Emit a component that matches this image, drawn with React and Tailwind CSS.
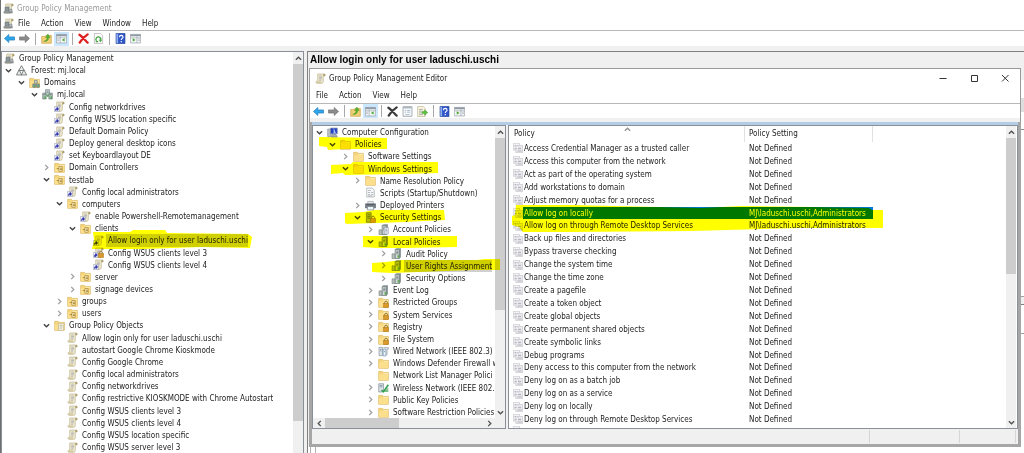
import { clsx } from 'clsx'

// Left padding per tree level
const indents = ['pl-[2px]', 'pl-[15px]', 'pl-[28px]', 'pl-[40px]', 'pl-[53px]', 'pl-[66px]', 'pl-[79px]']

const consoleTree = [
  { label: 'Group Policy Management', icon: 'console', root: true },
  { label: 'Forest: mj.local', icon: 'forest', level: 0, open: true },
  { label: 'Domains', icon: 'domains', level: 1, open: true },
  { label: 'mj.local', icon: 'domain', level: 2, open: true },
  { label: 'Config networkdrives', icon: 'link', level: 3 },
  { label: 'Config WSUS location specific', icon: 'link', level: 3 },
  { label: 'Default Domain Policy', icon: 'link', level: 3 },
  { label: 'Deploy general desktop icons', icon: 'link', level: 3 },
  { label: 'set Keyboardlayout DE', icon: 'link', level: 3 },
  { label: 'Domain Controllers', icon: 'ou', level: 3, open: false },
  { label: 'testlab', icon: 'ou', level: 3, open: true },
  { label: 'Config local administrators', icon: 'link', level: 4 },
  { label: 'computers', icon: 'ou', level: 4, open: true },
  { label: 'enable Powershell-Remotemanagement', icon: 'link', level: 5 },
  { label: 'clients', icon: 'ou', level: 5, open: true },
  { label: 'Allow login only for user laduschi.uschi', icon: 'link', level: 6, selected: true, marker: 'login' },
  { label: 'Config WSUS clients level 3', icon: 'linkLock', level: 6 },
  { label: 'Config WSUS clients level 4', icon: 'link', level: 6 },
  { label: 'server', icon: 'ou', level: 5, open: false },
  { label: 'signage devices', icon: 'ou', level: 5, open: false },
  { label: 'groups', icon: 'ou', level: 4, open: false },
  { label: 'users', icon: 'ou', level: 4, open: false },
  { label: 'Group Policy Objects', icon: 'gpoFolder', level: 3, open: true },
  { label: 'Allow login only for user laduschi.uschi', icon: 'scroll', level: 4 },
  { label: 'autostart Google Chrome Kioskmode', icon: 'scroll', level: 4 },
  { label: 'Config Google Chrome', icon: 'scroll', level: 4 },
  { label: 'Config local administrators', icon: 'scroll', level: 4 },
  { label: 'Config networkdrives', icon: 'scroll', level: 4 },
  { label: 'Config restrictive KIOSKMODE with Chrome Autostart', icon: 'scroll', level: 4 },
  { label: 'Config WSUS clients level 3', icon: 'scroll', level: 4 },
  { label: 'Config WSUS clients level 4', icon: 'scroll', level: 4 },
  { label: 'Config WSUS location specific', icon: 'scroll', level: 4 },
  { label: 'Config WSUS server level 3', icon: 'scroll', level: 4 },
]

const editorTree = [
  { label: 'Computer Configuration', icon: 'computer', level: 0, open: true },
  { label: 'Policies', icon: 'folder', level: 1, open: true, marker: 'policies' },
  { label: 'Software Settings', icon: 'folder', level: 2, open: false },
  { label: 'Windows Settings', icon: 'folder', level: 2, open: true, marker: 'windows' },
  { label: 'Name Resolution Policy', icon: 'folder', level: 3, open: false },
  { label: 'Scripts (Startup/Shutdown)', icon: 'script', level: 3 },
  { label: 'Deployed Printers', icon: 'printer', level: 3, open: false },
  { label: 'Security Settings', icon: 'serverLock', level: 3, open: true, marker: 'security' },
  { label: 'Account Policies', icon: 'serverDoc', level: 4, open: false },
  { label: 'Local Policies', icon: 'server', level: 4, open: true, marker: 'local' },
  { label: 'Audit Policy', icon: 'server', level: 5, open: false },
  { label: 'User Rights Assignment', icon: 'server', level: 5, open: false, selected: true, marker: 'rights' },
  { label: 'Security Options', icon: 'server', level: 5, open: false },
  { label: 'Event Log', icon: 'server', level: 4, open: false },
  { label: 'Restricted Groups', icon: 'folderLock', level: 4, open: false },
  { label: 'System Services', icon: 'folderLock', level: 4, open: false },
  { label: 'Registry', icon: 'folderLock', level: 4, open: false },
  { label: 'File System', icon: 'folderLock', level: 4, open: false },
  { label: 'Wired Network (IEEE 802.3) P', icon: 'wired', level: 4, open: false },
  { label: 'Windows Defender Firewall w', icon: 'folder', level: 4, open: false },
  { label: 'Network List Manager Polici', icon: 'folder', level: 4 },
  { label: 'Wireless Network (IEEE 802.1', icon: 'wireless', level: 4, open: false },
  { label: 'Public Key Policies', icon: 'folder', level: 4, open: false },
  { label: 'Software Restriction Policies', icon: 'folder', level: 4, open: false },
]

const policies = [
  { name: 'Access Credential Manager as a trusted caller' },
  { name: 'Access this computer from the network' },
  { name: 'Act as part of the operating system' },
  { name: 'Add workstations to domain' },
  { name: 'Adjust memory quotas for a process' },
  { name: 'Allow log on locally', setting: 'MJ\\laduschi.uschi,Administrators', selected: true },
  { name: 'Allow log on through Remote Desktop Services', setting: 'MJ\\laduschi.uschi,Administrators' },
  { name: 'Back up files and directories' },
  { name: 'Bypass traverse checking' },
  { name: 'Change the system time' },
  { name: 'Change the time zone' },
  { name: 'Create a pagefile' },
  { name: 'Create a token object' },
  { name: 'Create global objects' },
  { name: 'Create permanent shared objects' },
  { name: 'Create symbolic links' },
  { name: 'Debug programs' },
  { name: 'Deny access to this computer from the network' },
  { name: 'Deny log on as a batch job' },
  { name: 'Deny log on as a service' },
  { name: 'Deny log on locally' },
  { name: 'Deny log on through Remote Desktop Services' },
]

// Highlighter strokes, one outline per marked row
const markers = {
  login: { box: 'left-[90px] -top-[4px] w-[160px] h-[20px]', view: '0 0 160 20', points: '1,2 38,2 41,0 73,0 75,3 156,4 160,7 158,18 110,17 50,19 0,19 2,10' },
  policies: { box: 'left-[6px] -top-[1px] w-[68px] h-[13px]', view: '0 0 68 13', points: '0,0 68,1 68,12 25,12 9,13 8,10 0,9' },
  windows: { box: 'left-[18px] -top-[1px] w-[108px] h-[14px]', view: '0 0 108 14', points: '0,3 20,2 22,0 107,0 107,11 70,12 14,13 12,11 0,12' },
  security: { box: 'left-[32px] -top-[1px] w-[100px] h-[15px]', view: '0 0 100 15', points: '0,3 18,2 30,0 99,0 100,10 60,12 2,14 0,13' },
  local: { box: 'left-[50px] top-0 w-[94px] h-[12px]', view: '0 0 94 12', points: '0,0 94,0 94,11 40,12 14,12 0,11' },
  rights: { box: 'left-[59px] -top-[1px] w-[129px] h-[14px]', view: '0 0 129 14', points: '0,4 14,3 30,1 105,1 112,0 128,0 128,11 100,11 20,14 0,13' },
  logon: { box: 'left-[2px] -top-[3px] w-[374px] h-[28px]', view: '0 0 374 28', points: '5,1 60,1 190,4 230,2 300,3 358,4 361,6 372,6 372,24 290,24 180,27 60,28 12,28 8,23 1,21 1,12 4,11' },
}

function Marker({ name }) {
  const { box, view, points } = markers[name]
  return (
    <svg aria-hidden="true" viewBox={view} className={clsx('pointer-events-none absolute z-10 max-w-none mix-blend-multiply', box)}>
      <polygon points={points} fill="#ffff00" />
    </svg>
  )
}

function Scroll() {
  return (
    <g>
      <path d="M4 1.500h9.500c1.800 0 2 3 .2 3H12V12c0 2-1 3-2.500 3H3c-1.800 0-2.200-2.600-.4-2.900H4z" fill="#f1ecd2" stroke="#b9ae86" strokeWidth="1" />
      <path d="M12 4.500V3.200c0-1 .5-1.700 1.500-1.700 1.800 0 2 3 .2 3z" fill="#a89a68" />
      <path d="M6 4.500h4M6 6.500h4M6 8.500h4M6 10.500h3" stroke="#a0a0a8" strokeWidth="1" />
      <path d="M2.600 12.100h6.400v2.900H3c-1.500 0-1.800-2.500-.4-2.900z" fill="#d6cca2" />
    </g>
  )
}

function Folder() {
  return (
    <g>
      <path d="M1 2h5.500L8 3.500h7v11.500H1z" fill="#f5d67c" stroke="#d9ae4e" strokeWidth="0.9" />
      <path d="M1.500 6h13v8.500h-13z" fill="#fbdf8d" />
      <path d="M8 4.300h6.500v1.200H8z" fill="#fff2c2" />
    </g>
  )
}

function Lock() {
  return (
    <g>
      <path d="M9.700 10V8c0-2.700 4-2.700 4 0v2" fill="none" stroke="#8a7030" strokeWidth="1.400" />
      <rect x="8" y="9.500" width="7.500" height="6" fill="#d99a2b" stroke="#a8701a" strokeWidth="0.7" />
    </g>
  )
}

function ServerBox() {
  return (
    <g>
      <path d="M6 2l2-1.500h6.500V13l-2 2.500H6z" fill="#8e9a9b" />
      <path d="M6 2h6v13.500H6z" fill="#d5dcdc" stroke="#5f6b6d" strokeWidth="0.9" />
      <path d="M7.500 4.500h3.200M7.500 6.500h3.200M7.500 8.500h3.200" stroke="#5f6b6d" strokeWidth="1" />
      <path d="M9.500 10.500h2.500v3.500H9.500z" fill="#58a845" />
      <path d="M1.500 8.500h4v7h-4z" fill="#b7c0bb" stroke="#6b7872" strokeWidth="0.8" />
    </g>
  )
}

const drawings = {
  scroll: <Scroll />,
  console: (
    <g>
      <Scroll />
      <path d="M3 6h5v6H3z" fill="#8d989d" stroke="#5c666b" strokeWidth="0.8" />
      <path d="M1 12h13v3H1z" fill="#8c9296" />
      <path d="M9 9h4v4H9z" fill="#b8bec1" stroke="#6c757a" strokeWidth="0.8" />
    </g>
  ),
  forest: (
    <g fill="#e9ebe9" stroke="#666c6b" strokeWidth="1.200">
      <path d="M8 1l4 7H4z" />
      <path d="M4.500 7l4 7.500H.7z" />
      <path d="M11.500 7l4 7.500H7.700z" />
    </g>
  ),
  domains: (
    <g>
      <Folder />
      <path d="M8 5h4v4H8z" fill="#c7d0cf" stroke="#5f7073" strokeWidth="0.8" />
      <path d="M5.500 10h4v5h-4zM11 10h4v5h-4z" fill="#8fa9a3" stroke="#536b66" strokeWidth="0.8" />
      <path d="M7.500 12H9v2H7.500zM13 12h1.500v2H13z" fill="#4ea83f" />
    </g>
  ),
  domain: (
    <g>
      <path d="M5 1h6v8H5z" fill="#cfd8d8" stroke="#6c7c7d" strokeWidth="0.9" />
      <path d="M1 6h5v8.500H1zM10 6h5v8.500h-5z" fill="#aebdb9" stroke="#5b706a" strokeWidth="0.9" />
      <path d="M6.500 3h3M6.500 5h3M2 8h3M11 8h3" stroke="#637374" strokeWidth="0.9" />
      <path d="M3.500 11h2v3h-2zM12.500 11h2v3h-2zM7.500 8.500h2v3h-2z" fill="#45a844" />
    </g>
  ),
  link: (
    <g>
      <Scroll />
      <path d="M.5 8h7v7.500h-7z" fill="#eceef8" stroke="#9da0b5" strokeWidth="0.8" />
      <path d="M2 14c0-2.500 1-3.500 2.500-3.500V9l2.300 2.500-2.300 2.500v-1.500c-1 0-1.600.5-2.500 1.500z" fill="#2a2fa8" stroke="#2a2fa8" strokeWidth="0.7" />
    </g>
  ),
  linkLock: (
    <g>
      <Scroll />
      <path d="M.5 8h6.500v7.500H.5z" fill="#eceef8" stroke="#9da0b5" strokeWidth="0.8" />
      <path d="M2 14c0-2.500 1-3.500 2-3.500V9l2.300 2.500L4 14z" fill="#2a2fa8" stroke="#2a2fa8" strokeWidth="0.6" />
      <Lock />
    </g>
  ),
  ou: (
    <g>
      <Folder />
      <path d="M7 6.500h5v7H7z" fill="#fff4c9" stroke="#a8822a" strokeWidth="1" />
      <path d="M8.500 9h3M8.500 11h3M4 9.500h3" stroke="#94701c" strokeWidth="1.100" />
    </g>
  ),
  gpoFolder: (
    <g>
      <Folder />
      <path d="M6 5.500h8c1.500 0 1.500 2 0 2v6c0 1-.7 1.700-1.500 1.700H7c-1.300 0-1.300-2 0-2z" fill="#f7f3e0" stroke="#b3a984" strokeWidth="0.9" />
      <path d="M8.500 8H12M8.500 10H12M8.500 12h3" stroke="#a5a5a5" strokeWidth="0.9" />
    </g>
  ),
  folder: <Folder />,
  folderLock: (
    <g>
      <Folder />
      <Lock />
    </g>
  ),
  server: <ServerBox />,
  serverDoc: (
    <g>
      <ServerBox />
      <path d="M9 5h6v9.500H9z" fill="#eef1f6" stroke="#8189a0" strokeWidth="0.8" />
      <path d="M10.500 7.500h3M10.500 9.500h3M10.500 11.500h3" stroke="#7c87a8" strokeWidth="0.9" />
    </g>
  ),
  serverLock: (
    <g>
      <path d="M2 1h7v14H2z" fill="#b3bab4" stroke="#646e68" strokeWidth="0.9" />
      <path d="M3.500 4h4M3.500 6.500h4M3.500 9h4" stroke="#5d6661" strokeWidth="1" />
      <Lock />
    </g>
  ),
  computer: (
    <g>
      <path d="M1 3h4v11H1z" fill="#bcc3c9" stroke="#747d86" strokeWidth="0.8" />
      <path d="M5 1.500h10V10H5z" fill="#2440c4" stroke="#8d97a5" strokeWidth="1" />
      <path d="M10 2v7.500l2-2 1.500 3" fill="#a9c2ff" stroke="#dbe4ff" strokeWidth="0.6" />
      <path d="M7 11h6l2 3.500H6z" fill="#aab0b7" stroke="#5f6870" strokeWidth="0.7" />
    </g>
  ),
  script: (
    <g>
      <path d="M2.500 1.500h8l3 3v10h-11z" fill="#f8f9fa" stroke="#a1a6ab" strokeWidth="1" />
      <path d="M4.500 5h4M4.500 8h3M9 8h3M4.500 11h3M9 11h3M4.500 13h6" stroke="#9199a3" strokeWidth="1" />
    </g>
  ),
  printer: (
    <g>
      <path d="M4 2h8v4H4z" fill="#e8eaec" stroke="#8f959b" strokeWidth="0.8" />
      <path d="M.5 5.500h15v6H.5z" fill="#7d858d" stroke="#535a61" strokeWidth="0.8" />
      <path d="M3.500 9.500h9v5h-9z" fill="#eef5fb" stroke="#6c747b" strokeWidth="0.9" />
      <path d="M2 7h12" stroke="#3c4248" strokeWidth="1" />
    </g>
  ),
  wired: (
    <g>
      <path d="M1.500 2h5v12h-5z" fill="#dde4ea" stroke="#7a8791" strokeWidth="0.9" />
      <path d="M7.500 4.500h4v10h-4z" fill="#eaf1f8" stroke="#6286aa" strokeWidth="0.9" />
      <path d="M8 2.500h7v2h-2v9" fill="none" stroke="#8b98a4" strokeWidth="1.200" />
      <path d="M3 5h2M3 7h2M8.800 8h1.500" stroke="#56748f" strokeWidth="0.9" />
    </g>
  ),
  wireless: (
    <g>
      <path d="M1 2.500h7v12H1z" fill="#dbe2e8" stroke="#77848e" strokeWidth="0.9" />
      <path d="M2.500 5h4M2.500 7h4" stroke="#6c7983" strokeWidth="0.9" />
      <path d="M8 14.500h7V8z" fill="#7fbf8c" />
      <path d="M5 12l3 2 7-10" fill="none" stroke="#2f9d4d" strokeWidth="2.200" />
    </g>
  ),
  policy: (
    <g>
      <path d="M.5.5h10v11H.5z" fill="#f4f4f6" stroke="#b9b9c0" strokeWidth="0.9" />
      <path d="M10.500 4h5v11.500h-11v-4" fill="#ededf0" stroke="#b9b9c0" strokeWidth="0.9" />
      <path d="M2.500 3h3v2.500h-3zM7 3h2v2.500H7zM2.500 7.500H6V10H2.500zM8 7.500h5v2.500H8z" fill="#b6b7c2" />
      <path d="M7 12.800h7" stroke="#a3a3ad" strokeWidth="1.300" />
    </g>
  ),
  back: <path d="M.7 8L7 2.200v3.500h8.300v4.600H7v3.500z" fill="#2fa6ea" stroke="#1674b8" strokeWidth="0.9" />,
  forward: <path d="M15.300 8L9 2.200v3.500H.7v4.600H9v3.500z" fill="#8c8c8c" stroke="#6b6b6b" strokeWidth="0.9" />,
  up: (
    <g>
      <path d="M1 5h5l1-1.500h8v11.500H1z" fill="#f1cf76" stroke="#c79a3c" strokeWidth="0.9" />
      <path d="M4 12c3.500-.5 4.800-3 4.800-5.500H6.500L10 1.500l3.500 5h-2.300c0 4-2.700 6.500-7.200 5.500z" fill="#54b52f" stroke="#338519" strokeWidth="0.5" />
    </g>
  ),
  panes: (
    <g>
      <path d="M.5 2h15v12.500H.5z" fill="#f4f6f8" stroke="#8b949c" strokeWidth="0.9" />
      <path d="M.5 2h15v2.700H.5z" fill="#909aa4" />
      <path d="M6 5v9.500M.5 7h15" stroke="#9aa3ab" strokeWidth="0.9" />
      <path d="M12.500 7.500v5L8.500 10z" fill="#46a82c" />
      <path d="M1.500 9h3M1.500 11h3" stroke="#a3abb2" strokeWidth="0.9" />
    </g>
  ),
  panesRight: (
    <g>
      <path d="M.5 2h15v12.500H.5z" fill="#f4f6f8" stroke="#8b949c" strokeWidth="0.9" />
      <path d="M.5 2h15v2.700H.5z" fill="#909aa4" />
      <path d="M10 5v9.500M.5 7h15" stroke="#9aa3ab" strokeWidth="0.9" />
      <path d="M4 7.500v5l4-2.500z" fill="#46a82c" />
      <path d="M11.500 9h3M11.500 11h3" stroke="#a3abb2" strokeWidth="0.9" />
    </g>
  ),
  deleteRed: (
    <path d="M2 2.500C6 5 10 10 14 14M14 2C9 5.500 5 9.500 2.500 14" fill="none" stroke="#dd1f1f" strokeWidth="3.200" strokeLinecap="round" />
  ),
  deleteDark: (
    <path d="M2 2.500C6 5 10 10 14 14M14 2C9 5.500 5 9.500 2.500 14" fill="none" stroke="#3c3c3c" strokeWidth="3.200" strokeLinecap="round" />
  ),
  refresh: (
    <g>
      <path d="M2 .7h9l3 3v11.600H2z" fill="#fbfbfb" stroke="#a4a4a4" strokeWidth="0.9" />
      <path d="M5 11.500a3.600 3.600 0 1 1 6-.5M4 12.500h3.500" fill="none" stroke="#3fa53b" strokeWidth="1.800" />
      <path d="M8.500 9.500l4.500.5-2.500 3.500z" fill="#3fa53b" />
    </g>
  ),
  properties: (
    <g>
      <path d="M1.500 1h13v14h-13z" fill="#f6f8fa" stroke="#98a1a9" strokeWidth="1.200" />
      <path d="M2 1.500h12v2H2z" fill="#a8b2bb" />
      <path d="M4 6.500h2M7.500 6.500H12M4 9h2M7.500 9H12M5 12.500h6" stroke="#8fa6bd" strokeWidth="1" />
    </g>
  ),
  exportList: (
    <g>
      <path d="M1 .7h8l3 3v11.600H1z" fill="#fbf6df" stroke="#b3aa85" strokeWidth="0.9" />
      <path d="M3 5h5.500M3 7.500h4M3 10h4M3 12.500h5.500" stroke="#8a8f94" strokeWidth="1" />
      <path d="M7.500 8H11V5.500l4.700 4L11 13.500V11H7.500z" fill="#5cc23e" stroke="#37912a" strokeWidth="0.6" />
    </g>
  ),
  help: (
    <g>
      <path d="M1.500.5h13v15h-13z" fill="#2f57c8" stroke="#1c3a96" strokeWidth="0.9" />
      <path d="M2 1h2.500v14H2z" fill="#93b0ee" />
      <path d="M6.500 6c0-3.300 5.200-3.300 5.200 0 0 1.800-2.600 1.800-2.600 4M9.100 11.500v2" fill="none" stroke="#fff" strokeWidth="1.700" />
    </g>
  ),
}

function Icon({ name, className = 'size-[11px]' }) {
  return (
    <svg aria-hidden="true" viewBox="0 0 16 16" className={clsx('block shrink-0', className)}>
      {drawings[name]}
    </svg>
  )
}

const arrows = {
  down: 'M1 2.500l3 3 3-3',
  right: 'M2.500 1l3 3-3 3',
  left: 'M5.500 1l-3 3 3 3',
  up: 'M1 5.500l3-3 3 3',
}

function Arrow({ dir, className }) {
  return (
    <svg aria-hidden="true" viewBox="0 0 8 8" className={clsx('block size-[7px] shrink-0', className)}>
      <path d={arrows[dir]} fill="none" stroke="currentColor" strokeWidth="1.500" />
    </svg>
  )
}

function TreeRow({ item }) {
  const expandable = item.open !== undefined
  return (
    <li className={clsx('relative flex min-h-0 flex-1 items-center', item.root ? 'pl-[2px]' : indents[item.level])}>
      {!item.root && (
        <span className="flex w-[12px] shrink-0">
          {expandable && (
            <button type="button" aria-label={`${item.open ? 'Collapse' : 'Expand'} ${item.label}`} className="px-px">
              <Arrow dir={item.open ? 'down' : 'right'} className={item.open ? 'text-[#404040]' : 'text-[#a0a0a0]'} />
            </button>
          )}
        </span>
      )}
      <Icon name={item.icon} />
      <span className={clsx('ml-[2px] min-w-0 self-stretch overflow-hidden pl-[2px] leading-[13px] whitespace-nowrap', item.selected && 'bg-[#d0d0d0]')}>
        {item.label}
      </span>
      {item.marker && <Marker name={item.marker} />}
    </li>
  )
}

function Tree({ items, label }) {
  return (
    <ul aria-label={label} className="flex min-h-0 min-w-0 flex-1 flex-col">
      {items.map((item, i) => (
        <TreeRow key={i} item={item} />
      ))}
    </ul>
  )
}

function VerticalScroll({ thumb, rest, end = true }) {
  return (
    <div className="flex w-[10px] shrink-0 flex-col bg-[#f0f0f0] text-[#505050]">
      <button type="button" aria-label="Scroll up" className="flex h-[12px] items-center justify-center">
        <Arrow dir="up" />
      </button>
      <div className={clsx('bg-[#cdcdcd]', thumb)} />
      <div className={rest} />
      {end && (
        <button type="button" aria-label="Scroll down" className="flex h-[12px] items-center justify-center">
          <Arrow dir="down" />
        </button>
      )}
    </div>
  )
}

function MenuBar({ items, className }) {
  return (
    <nav className={clsx('flex items-center', className)}>
      {items.map((item) => (
        <button key={item} type="button">{item}</button>
      ))}
    </nav>
  )
}

function ToolButton({ icon, label, active }) {
  return (
    <button
      type="button"
      aria-label={label}
      className={clsx('flex h-[14px] w-[15px] items-center justify-center', active && 'bg-[#cce8ff]')}
    >
      <Icon name={icon} />
    </button>
  )
}

function Separator() {
  return <span className="mx-[3px] h-[12px] w-px bg-[#a8a8a8]" />
}

function PolicyTable() {
  return (
    <table className="flex min-w-0 flex-1 flex-col overflow-hidden">
      <thead className="block">
        <tr className="flex h-[16px] text-left">
          <th className="relative w-[236px] border-r border-[#e0e0e0] pl-[5px] leading-[16px] font-normal">
            Policy
            <Arrow dir="up" className="absolute top-0 left-[115px] text-[#909090]" />
          </th>
          <th className="w-[128px] border-r border-[#e0e0e0] pl-[4px] leading-[16px] font-normal">Policy Setting</th>
        </tr>
      </thead>
      <tbody className="flex min-h-0 flex-1 flex-col">
        {policies.map((policy) => (
          <tr key={policy.name} className="relative flex min-h-0 flex-1 pl-[4px]">
            <td className="flex w-[232px] items-center">
              <Icon name="policy" className="size-[10px]" />
              <span className={clsx('flex-1 self-stretch pl-px leading-[13px]', policy.selected && 'bg-[#0078d7] text-white')}>
                {policy.name}
              </span>
            </td>
            <td className={clsx('w-[128px] pl-[4px] leading-[13px]', policy.selected && 'bg-[#0078d7] text-white')}>
              {policy.setting ?? 'Not Defined'}
              {policy.selected && <Marker name="logon" />}
            </td>
          </tr>
        ))}
      </tbody>
      <tfoot className="block h-[2px] overflow-hidden pl-[4px]">
        <tr className="block">
          <td className="block">
            <Icon name="policy" className="size-[10px]" />
          </td>
        </tr>
      </tfoot>
    </table>
  )
}

function EditorWindow() {
  return (
    <section aria-label="Group Policy Management Editor" className="flex min-w-0 flex-1 flex-col">
      <div className="border-x border-t border-[#9a9a9a] bg-white">
        <header className="flex h-[18px] items-center pl-[5px]">
          <Icon name="scroll" />
          <h2 className="ml-[3px] flex-1">Group Policy Management Editor</h2>
          {['Minimize', 'Maximize', 'Close'].map((action) => (
            <button key={action} type="button" aria-label={action} className="flex h-full w-[31px] items-center justify-center">
              <svg aria-hidden="true" viewBox="0 0 8 8" className="size-[8px]" fill="none" stroke="#333">
                {action === 'Minimize' && <path d="M.5 4.500h7" />}
                {action === 'Maximize' && <path d="M1.500 1.500h6v6h-6z" />}
                {action === 'Close' && <path d="M1 1l6.500 6.500M7.500 1L1 7.500" />}
              </svg>
            </button>
          ))}
        </header>
        <MenuBar items={['File', 'Action', 'View', 'Help']} className="h-[16px] gap-[11px] pl-[6px]" />
        <div className="flex h-[15px] items-center border-t border-[#b8b8b8] pl-px">
          <ToolButton icon="back" label="Back" />
          <ToolButton icon="forward" label="Forward" />
          <Separator />
          <ToolButton icon="up" label="Up one level" />
          <ToolButton icon="panes" label="Show console tree" active />
          <Separator />
          <ToolButton icon="deleteDark" label="Delete" />
          <ToolButton icon="properties" label="Properties" />
          <ToolButton icon="exportList" label="Export list" />
          <Separator />
          <ToolButton icon="help" label="Help" />
          <ToolButton icon="panesRight" label="Show action pane" />
        </div>
        <div className="h-[4px] bg-[#f0f0f0]" />
      </div>

      <div className="flex min-h-0 flex-1 flex-col border-x-[3px] border-b-[3px] border-[#a6a6a6] bg-[#f0f0f0]">
        <div className="h-[3px] shrink-0 bg-[#b4cde6]" />
        <div className="flex min-h-0 flex-1 gap-[2px]">
          <div className="flex w-[194px] shrink-0 flex-col border border-[#8a8f98] bg-white">
            <div className="flex min-h-0 flex-1">
              <Tree items={editorTree} label="Policy tree" />
              <VerticalScroll thumb="flex-[171]" rest="flex-[96]" />
            </div>
            <div className="flex h-[10px] shrink-0 items-center bg-[#f0f0f0] pr-[10px] text-[#505050]">
              <button type="button" aria-label="Scroll left" className="flex w-[12px] justify-center">
                <Arrow dir="left" />
              </button>
              <div className="h-full flex-[74] bg-[#cdcdcd]" />
              <div className="flex-[84]" />
              <button type="button" aria-label="Scroll right" className="flex w-[12px] justify-center">
                <Arrow dir="right" />
              </button>
            </div>
          </div>
          <div className="flex min-w-0 flex-1 border border-[#8a8f98] bg-white pr-px">
            <PolicyTable />
            <VerticalScroll thumb="flex-[136]" rest="flex-[142]" />
          </div>
        </div>
        <footer className="flex h-[15px] shrink-0 py-px">
          <span className="flex-1 border-r border-[#d5d5d5]" />
          <span className="w-[90px] border-r border-[#d5d5d5]" />
          <span className="mr-[2px] w-[56px] border-r border-[#d5d5d5]" />
        </footer>
      </div>
    </section>
  )
}

export default function App() {
  return (
    <div className="flex h-screen flex-col overflow-hidden border-l border-[#707070] bg-[#f0f0f0] font-['DejaVu_Sans_Condensed','DejaVu_Sans',sans-serif] text-[8px] leading-[13px] text-[#1c1c1c]">
      <div className="shrink-0 bg-white">
        <header className="flex h-[16px] items-center pl-[2px] text-[#999999]">
          <Icon name="console" />
          <h1 className="ml-[3px]">Group Policy Management</h1>
        </header>
        <div className="flex h-[14px] items-center pl-[2px]">
          <Icon name="console" />
          <MenuBar items={['File', 'Action', 'View', 'Window', 'Help']} className="ml-[4px] gap-[11px]" />
        </div>
        <div className="flex h-[16px] items-center border-t border-[#b8b8b8] pl-px">
          <ToolButton icon="back" label="Back" />
          <ToolButton icon="forward" label="Forward" />
          <Separator />
          <ToolButton icon="up" label="Up one level" />
          <ToolButton icon="panes" label="Show console tree" active />
          <Separator />
          <ToolButton icon="deleteRed" label="Delete" />
          <ToolButton icon="refresh" label="Refresh" />
          <Separator />
          <ToolButton icon="help" label="Help" />
          <ToolButton icon="panesRight" label="Show action pane" />
        </div>
      </div>

      <main className="mt-[5px] flex min-h-0 flex-1 gap-[3px]">
        <aside className="flex w-[303px] shrink-0 border-x border-t border-[#8a8f98] bg-white">
          <Tree items={consoleTree} label="Console tree" />
          <VerticalScroll thumb="flex-[358]" rest="flex-[32]" end={false} />
        </aside>

        <div className="flex min-w-0 flex-1 flex-col border-t border-l border-[#808080]">
          <h2 className="h-[16px] shrink-0 pl-[2px] font-['Liberation_Sans',Arial,sans-serif] text-[10px] leading-[16px] font-bold text-black">
            Allow login only for user laduschi.uschi
          </h2>
          <div className="flex min-h-0 flex-1 pl-px">
            <EditorWindow />
            <div className="flex w-[3px] shrink-0 flex-col">
              <div className="flex-[12]" />
              <div className="flex-[18] bg-white" />
              <div className="flex-[14] bg-[#dedede]" />
              <div className="flex-[18] border-b border-[#8a8a8a] bg-white" />
              <div className="flex-[167] border-b border-[#a0a0a0] bg-white" />
              <div className="flex-[7] border-b border-[#808080]" />
              <div className="flex-[29] border-b border-[#a0a0a0] bg-white" />
              <div className="flex-[114] bg-white" />
            </div>
          </div>
          <div className="h-[6px] shrink-0 bg-white pl-[2px]">
            <div className="h-full w-[6px] border-x border-[#b0b0b0]" />
          </div>
        </div>
      </main>
    </div>
  )
}
